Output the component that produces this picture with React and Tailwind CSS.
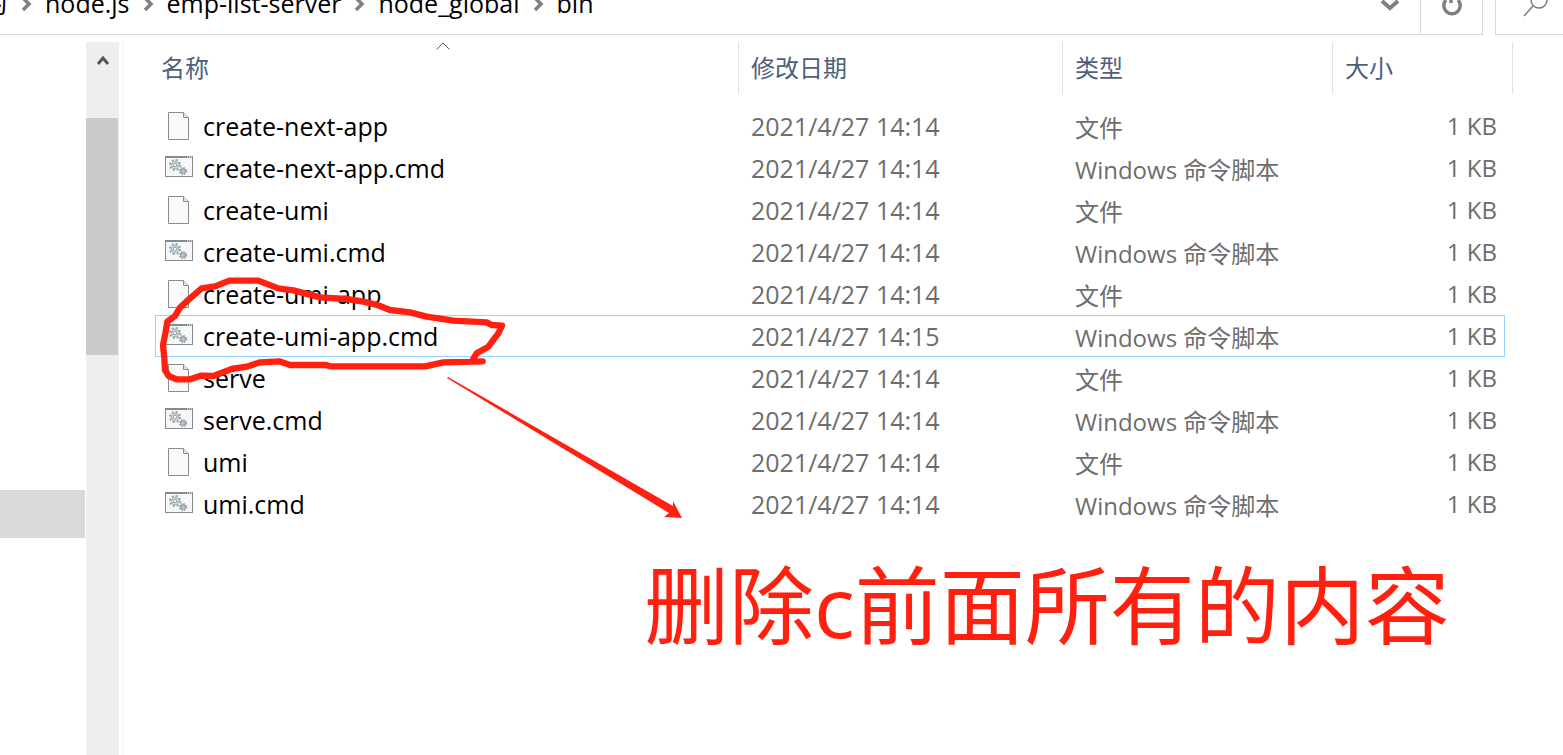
const crumbs = ['node.js', 'emp-list-server', 'node_global', 'bin']

const files = [
  { name: 'create-next-app', date: '2021/4/27 14:14' },
  { name: 'create-next-app.cmd', date: '2021/4/27 14:14' },
  { name: 'create-umi', date: '2021/4/27 14:14' },
  { name: 'create-umi.cmd', date: '2021/4/27 14:14' },
  { name: 'create-umi-app', date: '2021/4/27 14:14' },
  { name: 'create-umi-app.cmd', date: '2021/4/27 14:15', selected: true },
  { name: 'serve', date: '2021/4/27 14:14' },
  { name: 'serve.cmd', date: '2021/4/27 14:14' },
  { name: 'umi', date: '2021/4/27 14:14' },
  { name: 'umi.cmd', date: '2021/4/27 14:14' },
]

function CrumbArrow() {
  return (
    <svg className="w-[11px] h-[18px] shrink-0" viewBox="0 0 11 18" fill="none" stroke="#808080" strokeWidth="3.5">
      <path d="M2 4l6 6-6 6" />
    </svg>
  )
}

function FileIcon() {
  return (
    <svg className="w-7 h-7" viewBox="0 0 28 28">
      <path d="M3.5 .5h15l5 5v22h-20z" fill="#f9f9f9" stroke="#8c8c8c" />
      <path d="M18.5 .5v5h5" fill="#e4e4e4" stroke="#8c8c8c" />
    </svg>
  )
}

function CmdIcon() {
  return (
    <svg className="w-7 h-7" viewBox="0 0 28 28">
      <rect x=".5" y="2.5" width="27" height="20" fill="#f7f7f7" stroke="#868b90" />
      <path d="M0 3h28" stroke="#868b90" strokeWidth="2" />
      <path d="M22 3h1M24 3h1M26 3h1" stroke="#fff" />
      <g fill="none">
        <circle cx="10" cy="11" r="5" stroke="#93a1ab" strokeWidth="2" strokeDasharray="2 1.93" />
        <circle cx="10" cy="11" r="3.8" fill="#d5dde2" stroke="#a3b0b9" />
        <circle cx="10" cy="11" r="1.8" fill="#f7f7f7" stroke="#93a1ab" />
        <circle cx="18" cy="17" r="3.4" stroke="#8b99a3" strokeWidth="1.5" strokeDasharray="1.4 1.27" />
        <circle cx="18" cy="17" r="2.2" fill="#e6ebee" stroke="#8b99a3" strokeWidth="1.3" />
        <circle cx="18" cy="17" r=".8" fill="#7f8e99" />
      </g>
    </svg>
  )
}

function AddressBar() {
  return (
    <header className="flex gap-3 h-[35px] overflow-hidden">
      <div className="flex flex-1 min-w-0 border-b border-r border-[#d9d9d9]">
        <nav className="flex flex-1 min-w-0 items-end gap-[13px] pb-[15px] text-[25px] leading-8 text-black">
          <a href="#" className="-ml-[17px] shrink-0">习</a>
          {crumbs.map((crumb) => (
            <div key={crumb} className="flex items-center gap-[13px]">
              <CrumbArrow />
              <a href="#">{crumb}</a>
            </div>
          ))}
        </nav>
        <button className="w-[60px] flex items-end justify-center pb-[22px]" aria-label="历史记录">
          <svg className="w-5 h-3.5 shrink-0" viewBox="0 0 20 14" fill="none" stroke="#808080" strokeWidth="4">
            <path d="M2 3l8 7 8-7" />
          </svg>
        </button>
        <button className="w-[62px] flex items-end justify-center pb-[18px] border-l border-[#d9d9d9]" aria-label="刷新">
          <svg className="w-6 h-6 shrink-0" viewBox="0 0 24 24" fill="none" stroke="#808080" strokeWidth="3.5">
            <path d="M6 8a8.2 8.2 0 1 0 12 0" />
            <path d="M11 0v11" />
          </svg>
        </button>
      </div>
      <button className="w-[68px] flex items-end justify-center pl-3 pb-[17px] border-b border-l border-[#d9d9d9]" aria-label="搜索">
        <svg className="w-7 h-7 shrink-0" viewBox="0 0 28 28" fill="none" stroke="#7a7a7a" strokeWidth="1.5">
          <circle cx="17" cy="11" r="8" />
          <path d="M11 17l-9 10" />
        </svg>
      </button>
    </header>
  )
}

function FileTable() {
  const th = 'h-[52px] pl-3 text-left font-normal border-r border-[#e2e2e2]'

  return (
    <table className="w-full table-fixed border-separate border-spacing-0 text-[24px] leading-8">
      <colgroup>
        <col />
        <col className="w-[324px]" />
        <col className="w-[270px]" />
        <col className="w-[172px]" />
        <col className="w-2" />
      </colgroup>
      <thead className="text-[#4c607a]">
        <tr>
          <th className="relative h-[52px] pl-1.5 text-left font-normal border-r border-[#e2e2e2]">
            名称
            <svg className="absolute top-0 left-1/2 -ml-3 w-4 h-2.5" viewBox="0 0 16 10" fill="none" stroke="#5a5a5a">
              <path d="M1.5 7.5L8 1l6.5 6.5" />
            </svg>
          </th>
          <th className={th}>修改日期</th>
          <th className={th}>类型</th>
          <th className={th} colSpan={2}>大小</th>
        </tr>
      </thead>
      <tbody className="text-[#6d6d6d]">
        <tr><td className="h-[11px] p-0" colSpan={5}></td></tr>
        {files.map((file) => {
          const isCmd = file.name.endsWith('.cmd')
          const line = file.selected ? 'border-[#99d1ff]' : 'border-transparent'
          return (
            <tr key={file.name}>
              <td className={`h-[42px] p-0 pl-[9px] border-y border-l ${line}`}>
                <div className="flex items-center gap-[10px] text-[25px] text-black">
                  {isCmd ? <CmdIcon /> : <FileIcon />}
                  {file.name}
                </div>
              </td>
              <td className={`h-[42px] p-0 pl-3 border-y text-[25px] ${line}`}>{file.date}</td>
              <td className={`h-[42px] p-0 pl-3 pt-1 border-y ${line}`}>{isCmd ? 'Windows 命令脚本' : '文件'}</td>
              <td className={`h-[42px] p-0 pr-[7px] border-y border-r text-right ${line}`}>1 KB</td>
              <td className="p-0"></td>
            </tr>
          )
        })}
      </tbody>
    </table>
  )
}

// Red pen marks drawn over the list
function Annotations() {
  return (
    <>
      <svg className="absolute left-[26px] top-[228px] w-[370px] h-[125px] pointer-events-none" viewBox="0 0 1110 375" fill="none" stroke="#ff2010" strokeWidth="19" strokeLinecap="round" strokeLinejoin="round">
        <path d="M998 274L880 277L825 289H540L528 285H420L388 274L330 277L290 290L245 297L190 318L152 317L120 328L80 328L56 318L45 300L43 265L39 225L46 190L52 155L75 138L90 113L120 85L155 55L195 49L238 32H325L385 55L430 61L510 82L590 87L640 95L682 105L720 120L780 127L830 140L910 152L1010 157L1025 165L1056 167L1045 190L1015 230L980 250L970 266" />
      </svg>
      <svg className="absolute left-[305px] top-[317px] w-[270px] h-[170px] pointer-events-none" viewBox="0 0 270 170" fill="#ff2010">
        <path d="M18 19L19 18L244 147L244 142L253 159L235 158L240 154Z" />
      </svg>
      <p className="absolute left-[520px] top-[513px] text-[85px] leading-[100px] whitespace-nowrap text-[#ff2010]">
        删除c前面所有的内容
      </p>
    </>
  )
}

function App() {
  return (
    <div className="min-h-screen flex flex-col bg-white overflow-hidden font-['Open_Sans','Noto_Sans_CJK_SC',sans-serif]">
      <AddressBar />
      <div className="flex flex-1 pt-[7px]">
        <aside className="w-[85px] shrink-0 pt-[448px]">
          <div className="h-12 bg-[#d9d9d9]"></div>
        </aside>
        <div className="ml-px w-[33px] shrink-0 bg-[#efefef]">
          <button className="w-full h-[76px] flex justify-center pt-3" aria-label="向上滚动">
            <svg className="w-3.5 h-3.5" viewBox="0 0 14 14" fill="none" stroke="#555" strokeWidth="3">
              <path d="M2 10l5-6 5 6" />
            </svg>
          </button>
          <div className="w-8 h-[237px] bg-[#cbcbcb]"></div>
        </div>
        <main className="relative flex-1 min-w-0 ml-[3px] pl-[31px] pr-[50px] border-l-2 border-[#f7f7f7]">
          <FileTable />
          <Annotations />
        </main>
      </div>
    </div>
  )
}

export default App
